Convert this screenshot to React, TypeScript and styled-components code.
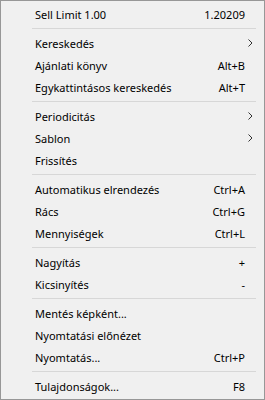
import React from "react";
import styled, { createGlobalStyle } from "styled-components";

const Global = createGlobalStyle`
  html, body { margin: 0; padding: 0; background: #f0f0f0; }
  body { font-family: "Noto Sans", "Liberation Sans", sans-serif; }
`;

const Menu = styled.div`
  box-sizing: border-box;
  width: 265px;
  height: 400px;
  background: #f0f0f0;
  border: 1px solid #979797;
  padding: 2px 0 2px 2px;
  display: flex;
  flex-direction: column;
  color: #000;
  font-size: 11px;
`;

const Row = styled.div`
  height: 22px;
  display: grid;
  grid-template-columns: 1fr auto 19px;
  align-items: center;
  padding-left: 32px;
`;

const Label = styled.span`
  white-space: nowrap;
`;

const Shortcut = styled.span`
  white-space: nowrap;
  text-align: right;
`;

const Arrow = styled.span`
  display: flex;
  align-items: center;
  justify-content: flex-start;
  padding-left: 3px;
`;

const Sep = styled.div`
  height: 7px;
  display: flex;
  align-items: center;
  padding-left: 29px;
  padding-right: 8px;
  &::after {
    content: "";
    flex: 1;
    height: 1px;
    background: #d7d7d7;
  }
`;

type Item = { label: string; shortcut?: string; sub?: boolean } | "sep";

const items: Item[] = [
  { label: "Sell Limit 1.00", shortcut: "1.20209" },
  "sep",
  { label: "Kereskedés", sub: true },
  { label: "Ajánlati könyv", shortcut: "Alt+B" },
  { label: "Egykattintásos kereskedés", shortcut: "Alt+T" },
  "sep",
  { label: "Periodicitás", sub: true },
  { label: "Sablon", sub: true },
  { label: "Frissítés" },
  "sep",
  { label: "Automatikus elrendezés", shortcut: "Ctrl+A" },
  { label: "Rács", shortcut: "Ctrl+G" },
  { label: "Mennyiségek", shortcut: "Ctrl+L" },
  "sep",
  { label: "Nagyítás", shortcut: "+" },
  { label: "Kicsinyítés", shortcut: "-" },
  "sep",
  { label: "Mentés képként..." },
  { label: "Nyomtatási előnézet" },
  { label: "Nyomtatás...", shortcut: "Ctrl+P" },
  "sep",
  { label: "Tulajdonságok...", shortcut: "F8" },
];

const Chevron = () => (
  <svg width="5" height="8" viewBox="0 0 5 8">
    <polyline points="0.5,0.5 4,4 0.5,7.5" fill="none" stroke="#333" strokeWidth="1" />
  </svg>
);

export default function App() {
  return (
    <>
      <Global />
      <Menu>
        {items.map((it, i) =>
          it === "sep" ? (
            <Sep key={i} />
          ) : (
            <Row key={i}>
              <Label>{it.label}</Label>
              <Shortcut>{it.shortcut ?? ""}</Shortcut>
              <Arrow>{it.sub ? <Chevron /> : null}</Arrow>
            </Row>
          )
        )}
      </Menu>
    </>
  );
}
